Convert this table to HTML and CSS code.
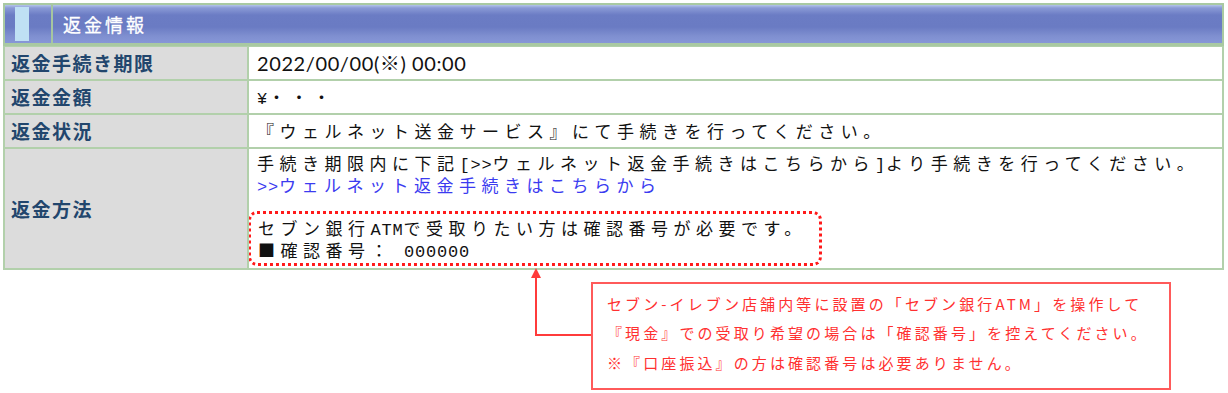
FILE: index.html
```html
<!DOCTYPE html>
<html lang="ja">
<head>
<meta charset="utf-8">
<title>返金情報</title>
<link rel="stylesheet" href="styles.css">
</head>
<body>
<div class="panel">
  <div class="head">
    <div class="head-mark"><span class="mark-bar"></span></div>
    <div class="head-title">返金情報</div>
  </div>
  <table class="info">
    <colgroup><col class="col-label"><col></colgroup>
    <tr class="r1">
      <th>返金手続き期限</th>
      <td class="latin">2022/00/00(※) 00:00</td>
    </tr>
    <tr class="r2">
      <th>返金金額</th>
      <td class="mono"><span class="hw">¥</span>・・・</td>
    </tr>
    <tr class="r3">
      <th>返金状況</th>
      <td class="mono">『ウェルネット送金サービス』にて手続きを行ってください。</td>
    </tr>
    <tr class="r4">
      <th>返金方法</th>
      <td class="mono method">
        <div class="line">手続き期限内に下記<span class="hw">[&gt;&gt;</span>ウェルネット返金手続きはこちらから<span class="hw">]</span>より手続きを行ってください。</div>
        <div class="line"><a class="link" href="#"><span class="hw">&gt;&gt;</span>ウェルネット返金手続きはこちらから</a></div>
        <div class="dotted">
          <div class="line">セブン銀行<span class="hw">ATM</span>で受取りたい方は確認番号が必要です。</div>
          <div class="line">■確認番号：<span class="hw"> 000000</span></div>
        </div>
      </td>
    </tr>
  </table>
</div>
<div class="note-area">
  <svg class="arrow" width="60" height="70" viewBox="0 0 60 70">
    <polygon points="5,0 0,10 10,10" fill="#ff3b3b"/>
    <polyline points="5,8 5,67 60,67" fill="none" stroke="#ff3b3b" stroke-width="2"/>
  </svg>
  <div class="callout">
    <p>セブン-イレブン店舗内等に設置の「セブン銀行ATM」を操作して</p>
    <p>『現金』での受取り希望の場合は「確認番号」を控えてください。</p>
    <p>※『口座振込』の方は確認番号は必要ありません。</p>
  </div>
</div>
</body>
</html>
```
FILE: styles.css
```css
* { box-sizing: border-box; }
body {
  margin: 0;
  background: #ffffff;
  font-family: "Noto Sans CJK JP", "Noto Sans", sans-serif;
}
.panel {
  margin: 3px 4px 0 3px;
}
.head {
  display: flex;
  height: 43px;
  border: 2px solid #a9c9a2;
  border-bottom-width: 3px;
  background: linear-gradient(to bottom, #b4c4ea 0px, #8a9ad6 3px, #6b7cc4 10px, #6a7bc3 22px, #7f8fd0 31px, #8797d7 38px);
}
.head-mark {
  width: 48px;
  border-right: 2px solid #a6c6a0;
  padding: 2px 0 2px 10px;
  display: flex;
}
.mark-bar {
  width: 14px;
  background: #bfe0f4;
}
.head-title {
  color: #ffffff;
  font-size: 18px;
  letter-spacing: 3px;
  padding-left: 10px;
  display: flex;
  align-items: center;
  -webkit-text-stroke: 0.3px #ffffff;
}
.info {
  width: 100%;
  border-collapse: collapse;
  table-layout: fixed;
}
.col-label { width: 244px; }
.info th, .info td {
  border: 2px solid #b2d0ab;
  border-top-width: 1px;
  vertical-align: middle;
  padding: 0 0 0 8px;
}
.info th {
  background: #dcdcdc;
  color: #22466d;
  text-align: left;
  font-size: 19px;
  font-weight: bold;
  letter-spacing: 1.5px;
  padding-left: 6px;
}
.info td { color: #111111; }
.r1 { height: 33px; }
.r2 { height: 34px; }
.r3 { height: 34px; }
.r4 { height: 121px; }
.latin {
  font-family: Lato, "Noto Sans CJK JP", sans-serif;
  font-size: 20px;
  letter-spacing: 0.6px;
}
.mono {
  font-size: 17px;
  letter-spacing: 5.5px;
}
.hw {
  font-family: "Liberation Mono", "DejaVu Sans Mono", monospace;
  letter-spacing: 0.8px;
  line-height: 10px;
}
.method {
  vertical-align: top !important;
  padding-top: 3px !important;
}
.line {
  line-height: 22px;
  height: 22px;
  white-space: nowrap;
}
.link {
  color: #3b3bf0;
  text-decoration: none;
}
.dotted {
  margin: 15px 0 1px -9px;
  width: 574px;
  border: 3px dotted #ff1a1a;
  border-radius: 9px;
  padding: 3px 0 2px 7px;
}
.note-area {
  display: flex;
  align-items: flex-start;
  padding-left: 531px;
}
.arrow {
  display: block;
  margin-top: -2px;
}
.callout {
  margin-top: 12px;
  width: 580px;
  height: 108px;
  border: 2px solid #ff5a5a;
  padding: 5px 0 0 14px;
  color: #ff3030;
  font-size: 15px;
  letter-spacing: 3.1px;
}
.callout p {
  margin: 0;
  line-height: 29.5px;
  white-space: nowrap;
}
```
